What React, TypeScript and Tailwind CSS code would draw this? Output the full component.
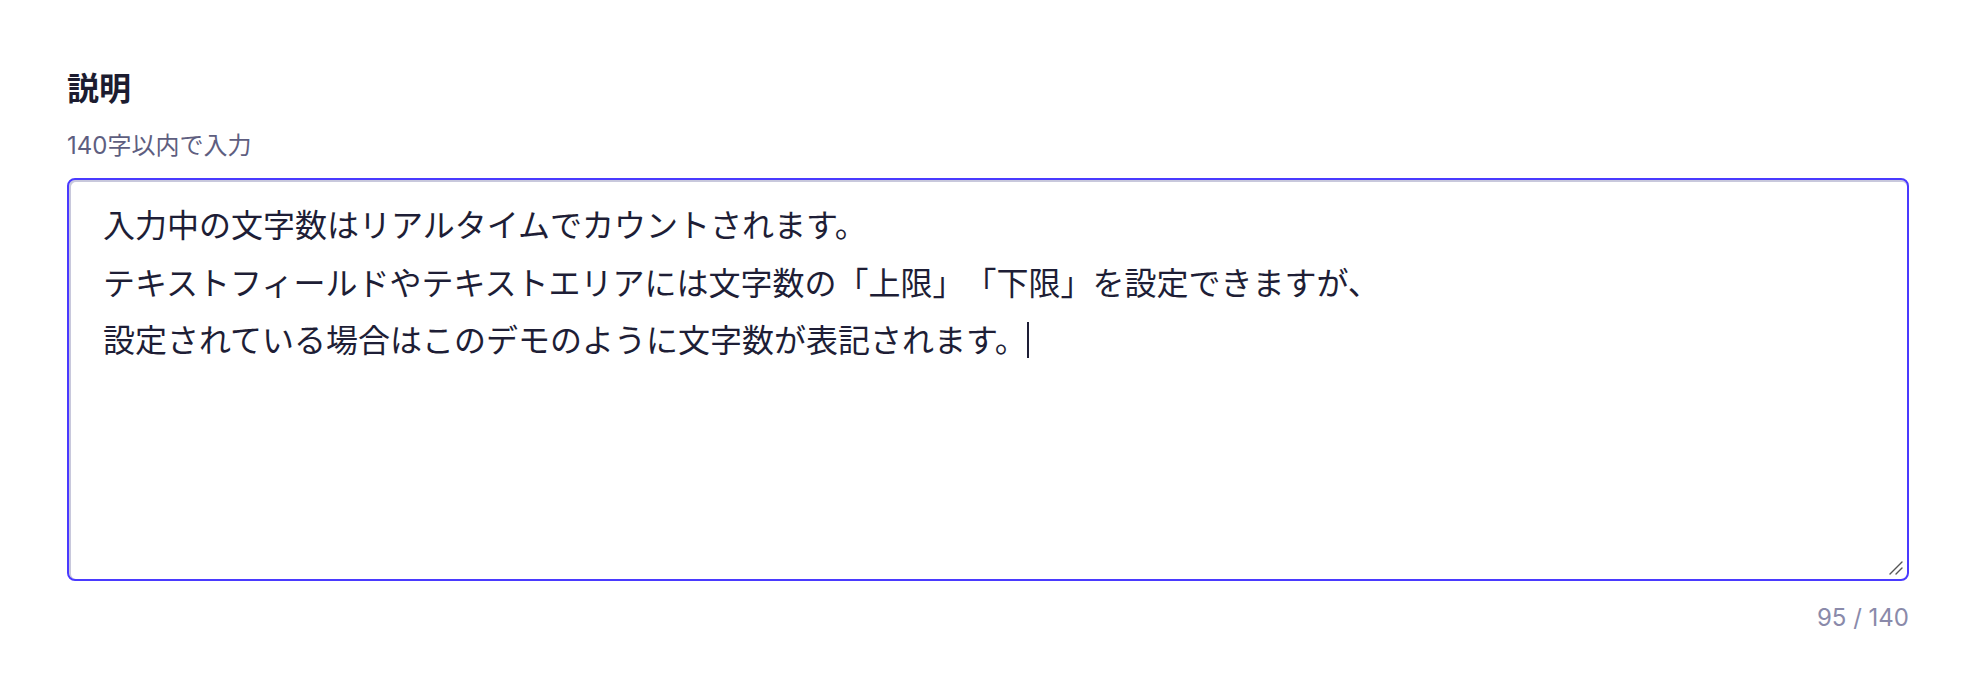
import React from 'react';

const lines = [
  '入力中の文字数はリアルタイムでカウントされます。',
  'テキストフィールドやテキストエリアには文字数の「上限」「下限」を設定できますが、',
  '設定されている場合はこのデモのように文字数が表記されます。',
];

export default function App() {
  return (
    <div className="min-h-screen bg-white font-['Inter','Noto_Sans_CJK_JP',sans-serif] [text-spacing-trim:space-all] pl-[67px] pr-[75px] pt-[65px]">
      <label className="block text-[32px] leading-[48px] font-bold text-[#1c1c30]">説明</label>
      <p className="mt-[15px] text-[24px] leading-[36px] text-[#5e5e80]">140字以内で入力</p>

      {/* テキストエリア（フォーカス状態） */}
      <div className="relative mt-[14px] h-[403px] rounded-lg border-2 border-[#4a3aff] bg-white shadow-[inset_1px_1px_0_1px_#c8c8dc] pl-[34px] pr-8 pt-[17px]">
        <div className="text-[32px] leading-[57.6px] text-[#1e1e36]">
          {lines.map((line, i) => (
            <div key={i}>
              {line}
              {i === lines.length - 1 && (
                <span className="ml-0 inline-block h-[36px] w-[2px] bg-[#1e1e36] align-[-6px]" />
              )}
            </div>
          ))}
        </div>
        <svg className="absolute right-[3px] bottom-[3px]" width="16" height="16" viewBox="0 0 16 16">
          <path d="M2 14 L14 2 M8 14 L14 8" stroke="#555" strokeWidth="1.4" strokeLinecap="round" />
        </svg>
      </div>

      <p className="mt-[19px] text-right text-[24px] leading-[36px] text-[#8a8aaa]">95 / 140</p>
    </div>
  );
}
